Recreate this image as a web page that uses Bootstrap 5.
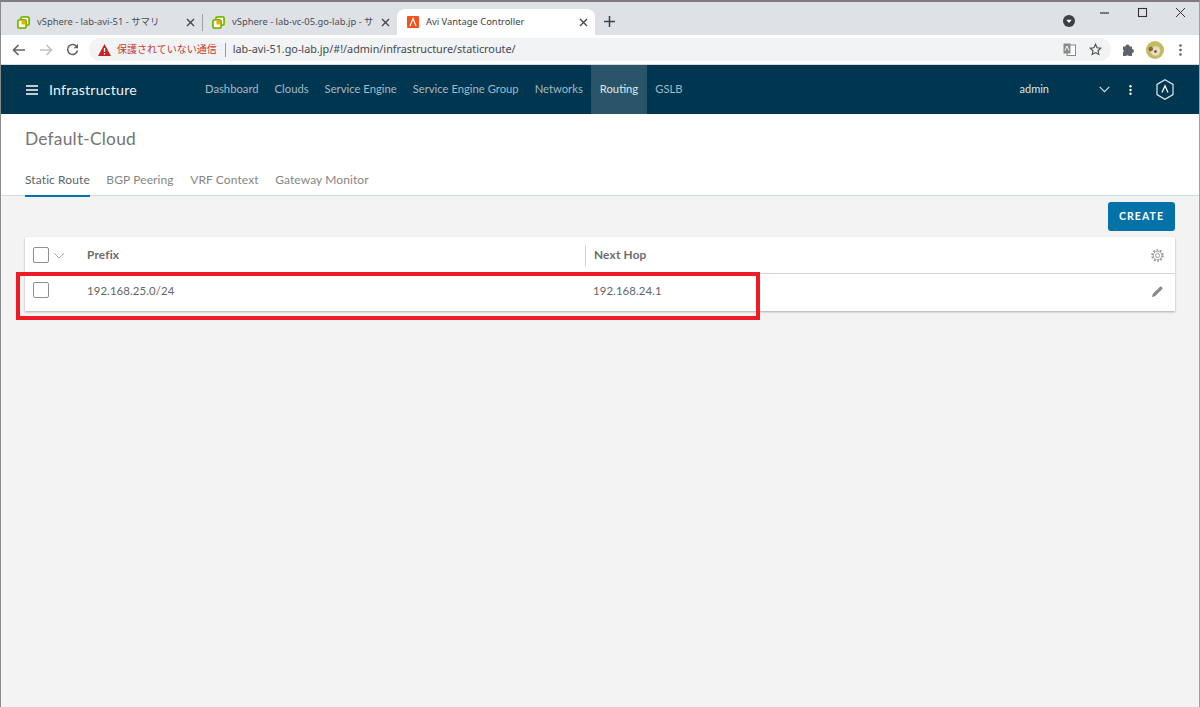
<!DOCTYPE html>
<html lang="ja">
<head>
<meta charset="utf-8">
<title>Avi Vantage Controller</title>
<link rel="stylesheet" href="https://cdn.jsdelivr.net/npm/bootstrap@5.3.0/dist/css/bootstrap.min.css">
<style>
html,body{height:707px;overflow:hidden}
body{font-family:Lato,"Noto Sans CJK JP",sans-serif;background:#f3f3f3;color:#555;border-left:1px solid #8a8a8a;border-top:2px solid #7d7d7d;border-right:1px solid #a0a0a0;position:relative}
svg{display:block;flex:none}
.tabstrip{height:33px;background:#dee1e6;padding-left:7px;font-family:"Noto Sans","Noto Sans CJK JP",sans-serif;font-size:9.4px;color:#4a4d52}
.tabitem{height:26px;width:194px;padding:0 7px 0 9px;position:relative}
.tabitem.cur{background:#fff;border-radius:8px 8px 0 0;width:198px;height:26px;color:#3c4043;padding-left:10px}
.tabitem .ttl{flex:1;white-space:nowrap;padding-left:7px}
.tabsep{width:1px;height:17px;background:#9aa0a6}
.plusic{margin:0 0 8px 9px}
.winctl{margin-left:auto;padding-right:13px;align-self:flex-start;padding-top:1px;gap:27px}
.dlcirc{margin:12px -3px 0 0}
.toolbar{height:29px;background:#fff;padding:0 8px 0 11px;border-bottom:1px solid #d8d8d8;box-sizing:content-box}
.fwd,.rld{margin-left:13px}
.omni{height:23px;width:1022px;background:#f1f3f4;border-radius:12px;margin-left:10px;padding:0 9px;font-family:"Noto Sans","Noto Sans CJK JP",sans-serif;font-size:10.8px;color:#45484c;white-space:nowrap}
.warn{color:#c5392f;font-size:10px;margin-left:6px}
.omnisep{width:1px;height:14px;background:#9a9a9a;margin:0 7px 0 8px}
.staric{margin-left:13px}
.puzzle{margin-left:11px}
.avatar{margin-left:11px}
.kebab{margin-left:15px}
.topnav{height:49px;background:#00364f;padding:0;color:#fff;font-size:11.25px}
.burger{margin-left:25px}
.appname{font-size:14.2px;margin-left:11px;width:148px;letter-spacing:.2px;color:#eef3f5}
.navlink{height:49px;padding:0 8px;color:#a3bac5;display:flex;align-items:center;text-decoration:none}
.navlink.on{background:#2a5568;color:#dfe8ec;padding:0 9px}
.usr{margin-left:auto;color:#dbe6ea;font-size:11px}
.chev{margin-left:50px}
.dots{margin-left:19px}
.hexlogo{margin:0 25px 0 24px}
.pagehead{height:82px;background:#fff;border-bottom:1px solid #d3dcdc;padding:14px 0 0 24px}
.cloudttl{font-size:17.4px;color:#757575;line-height:22px;font-weight:400;margin:0;letter-spacing:.2px}
.subtabs{margin-top:20px;gap:16.500px;font-size:12px;letter-spacing:.1px}
.subtab{height:27px;padding-top:1px;line-height:18px;color:#858585;text-decoration:none;display:block}
.subtab.on{color:#5c6468;border-bottom:2px solid #0073a8}
.actions{padding:6px 24px 0 0;height:41px}
.mkbtn{background:#0272a8;color:#fff;font-size:10.5px;font-weight:700;letter-spacing:1.1px;width:67px;height:29px;border-radius:3px;border:0;padding:0;font-family:Lato,sans-serif}
.gridbox{margin:0 24px 0 24px;background:#fff;box-shadow:0 1px 2px rgba(0,0,0,.3)}
.ghead{height:37px;border-bottom:1px solid #d5d5d5;font-weight:700;font-size:11.8px;color:#6b6b6b;letter-spacing:.2px}
.grow{height:37px;padding-bottom:3px;font-size:11.4px;color:#666;letter-spacing:.1px}
.cbcell{width:62px;padding-left:8px}
.cbrow{padding-bottom:2px}
.cbx{width:16px;height:16px;border:1px solid #8f8f8f;border-radius:2px;background:#fff;display:block}
.colprefix{width:498px}
.colhop{flex:1;padding-left:8px}
.sephead{border-left:1px solid #d0d0d0;height:21px;display:flex;align-items:center}
.endcell{width:24px;padding-right:10px}
.redbox{position:absolute;left:15px;top:270px;width:744px;height:48px;border:4px solid #ed1c24;pointer-events:none}
</style>
</head>
<body>
<div class="tabstrip d-flex align-items-end">
  <div class="tabitem d-flex align-items-center">
    <svg width="13" height="13" viewBox="0 0 13 13"><rect x="3.900" y=".9" width="8.200" height="8.200" rx="1.600" fill="#fff" stroke="#7ab800" stroke-width="1.800"/><rect x=".9" y="3.900" width="8.200" height="8.200" rx="1.600" fill="#fff" stroke="#7ab800" stroke-width="1.800"/><rect x="4.500" y="4.500" width="4" height="4" fill="#f5a800"/></svg>
    <span class="ttl">vSphere - lab-avi-51 - サマリ</span>
    <svg width="9" height="9" viewBox="0 0 9 9"><path d="M1 1l7 7M8 1l-7 7" stroke="#45484c" stroke-width="1.400"/></svg>
  </div>
  <div class="tabsep mb-1"></div>
  <div class="tabitem d-flex align-items-center">
    <svg width="13" height="13" viewBox="0 0 13 13"><rect x="3.900" y=".9" width="8.200" height="8.200" rx="1.600" fill="#fff" stroke="#7ab800" stroke-width="1.800"/><rect x=".9" y="3.900" width="8.200" height="8.200" rx="1.600" fill="#fff" stroke="#7ab800" stroke-width="1.800"/><rect x="4.500" y="4.500" width="4" height="4" fill="#f5a800"/></svg>
    <span class="ttl">vSphere - lab-vc-05.go-lab.jp - サ</span>
    <svg width="9" height="9" viewBox="0 0 9 9"><path d="M1 1l7 7M8 1l-7 7" stroke="#45484c" stroke-width="1.400"/></svg>
  </div>
  <div class="tabitem cur d-flex align-items-center">
    <svg width="12" height="12" viewBox="0 0 12 12"><rect width="12" height="12" rx="1" fill="#f4511e"/><path d="M3 10L6 2.500 9 10" fill="none" stroke="#fff" stroke-width="1.200"/></svg>
    <span class="ttl">Avi Vantage Controller</span>
    <svg width="9" height="9" viewBox="0 0 9 9"><path d="M1 1l7 7M8 1l-7 7" stroke="#45484c" stroke-width="1.400"/></svg>
  </div>
  <svg class="plusic" width="11" height="11" viewBox="0 0 11 11"><path d="M5.500 0v11M0 5.500h11" stroke="#3c4043" stroke-width="1.500"/></svg>
  <div class="winctl d-flex align-items-start">
    <svg class="dlcirc" width="12" height="12" viewBox="0 0 12 12"><circle cx="6" cy="6" r="6" fill="#3c4043"/><path d="M3.300 4.800h5.400L6 8z" fill="#fff"/></svg>
    <svg class="mt-1" width="11" height="11" viewBox="0 0 11 11"><path d="M1 6h9" stroke="#333" stroke-width="1.200"/></svg>
    <svg class="mt-1" width="11" height="11" viewBox="0 0 11 11"><rect x="1.500" y="1.500" width="8" height="8" fill="none" stroke="#333" stroke-width="1.100"/></svg>
    <svg class="mt-1" width="11" height="11" viewBox="0 0 11 11"><path d="M1 1l9 9M10 1l-9 9" stroke="#333" stroke-width="1"/></svg>
  </div>
</div>

<div class="toolbar d-flex align-items-center">
  <svg width="14" height="12" viewBox="0 0 14 12"><path d="M13 6H2M6.500 1L1.500 6l5 5" fill="none" stroke="#5f6368" stroke-width="1.600"/></svg>
  <svg class="fwd" width="14" height="12" viewBox="0 0 14 12"><path d="M1 6h11M7.500 1l5 5-5 5" fill="none" stroke="#bdc1c6" stroke-width="1.600"/></svg>
  <svg class="rld" width="13" height="13" viewBox="0 0 13 13"><path d="M11 4A5 5 0 1 0 11.500 7.500" fill="none" stroke="#5f6368" stroke-width="1.500"/><path d="M12 .8v4.400H7.600z" fill="#5f6368"/></svg>
  <div class="omni d-flex align-items-center">
    <svg width="13" height="12" viewBox="0 0 13 12"><path d="M6.500 0L13 12H0z" fill="#c5221f"/><path d="M6.500 4v4M6.500 9v1.400" stroke="#fff" stroke-width="1.300"/></svg>
    <span class="warn">保護されていない通信</span><span class="omnisep"></span>
    <span>lab-avi-51.go-lab.jp/#!/admin/infrastructure/staticroute/</span>
    <svg class="ms-auto" width="13" height="13" viewBox="0 0 13 13"><rect x="4" y="2" width="8.500" height="10.500" fill="#fff" stroke="#8a8a8a"/><rect x=".5" y=".5" width="7" height="10" fill="#8a8a8a"/><path d="M2 7.500L4 3l2 4.500M9 6v4.500" fill="none" stroke="#fff"/></svg>
    <svg class="staric" width="13" height="13" viewBox="0 0 24 24"><path d="M12 2.500l2.900 6.300 6.800.8-5 4.700 1.300 6.800-6-3.400-6 3.400 1.300-6.800-5-4.700 6.800-.8z" fill="none" stroke="#4a4d52" stroke-width="2.200"/></svg>
  </div>
  <svg class="puzzle" width="13" height="13" viewBox="0 0 13 13"><path d="M1 3.500h2.500a2 2 0 0 1 4 0H10V6a2 2 0 0 1 0 4v3H7a2 2 0 0 0-3 0H1V9.500a2 2 0 0 0 0-3z" fill="#5f6368"/></svg>
  <svg class="avatar" width="18" height="18" viewBox="0 0 18 18"><circle cx="9" cy="9" r="9" fill="#c2bb62"/><circle cx="9.500" cy="10" r="4.800" fill="#e8dcc0"/><circle cx="4.800" cy="8" r="2.300" fill="#8a6a35"/><circle cx="9.500" cy="10.500" r="1.200" fill="#5a4020"/></svg>
  <svg class="kebab" width="3" height="12" viewBox="0 0 3 12"><circle cx="1.500" cy="1.500" r="1.300" fill="#5f6368"/><circle cx="1.500" cy="6" r="1.300" fill="#5f6368"/><circle cx="1.500" cy="10.500" r="1.300" fill="#5f6368"/></svg>
</div>

<nav class="topnav d-flex align-items-center">
  <svg class="burger" width="12" height="10" viewBox="0 0 12 10"><path d="M0 1h12M0 5h12M0 9h12" stroke="#fff" stroke-width="1.700"/></svg>
  <span class="appname">Infrastructure</span>
  <a class="navlink" href="#">Dashboard</a>
  <a class="navlink" href="#">Clouds</a>
  <a class="navlink" href="#">Service Engine</a>
  <a class="navlink" href="#">Service Engine Group</a>
  <a class="navlink" href="#">Networks</a>
  <a class="navlink on" href="#">Routing</a>
  <a class="navlink" href="#">GSLB</a>
  <span class="usr">admin</span>
  <svg class="chev" width="11" height="7" viewBox="0 0 11 7"><path d="M.7.800l4.800 4.800L10.300.800" fill="none" stroke="#cfdde3" stroke-width="1.200"/></svg>
  <svg class="dots" width="3" height="10" viewBox="0 0 3 10"><circle cx="1.500" cy="1.200" r="1.200" fill="#fff"/><circle cx="1.500" cy="5" r="1.200" fill="#fff"/><circle cx="1.500" cy="8.800" r="1.200" fill="#fff"/></svg>
  <svg class="hexlogo" width="18" height="21" viewBox="0 0 18 21"><path d="M9 .8L17 5.400V15.600L9 20.200 1 15.600V5.400z" fill="none" stroke="#dfeaee" stroke-width="1.200"/><path d="M6 13.500L9 6.800l3 6.700" fill="none" stroke="#fff" stroke-width="1.300"/></svg>
</nav>

<header class="pagehead">
  <h1 class="cloudttl">Default-Cloud</h1>
  <div class="subtabs d-flex">
    <a class="subtab on" href="#">Static Route</a>
    <a class="subtab" href="#">BGP Peering</a>
    <a class="subtab" href="#">VRF Context</a>
    <a class="subtab" href="#">Gateway Monitor</a>
  </div>
</header>

<main>
  <div class="actions d-flex justify-content-end">
    <button class="mkbtn" type="button">CREATE</button>
  </div>
  <div class="gridbox">
    <div class="ghead d-flex align-items-center">
      <div class="cbcell d-flex align-items-center"><span class="cbx"></span>
        <svg class="ms-1" width="12" height="7" viewBox="0 0 12 7"><path d="M1 1l5 5 5-5" fill="none" stroke="#aaa" stroke-width="1"/></svg></div>
      <div class="colprefix">Prefix</div>
      <div class="colhop sephead">Next Hop</div>
      <div class="endcell">
        <svg width="13" height="13" viewBox="0 0 13 13"><circle cx="6.500" cy="6.500" r="5.300" fill="none" stroke="#9a9a9a" stroke-width="2" stroke-dasharray="1.800 1.530"/><circle cx="6.500" cy="6.500" r="4.200" fill="#fff" stroke="#9a9a9a" stroke-width=".8"/><circle cx="6.500" cy="6.500" r="2" fill="none" stroke="#9a9a9a"/></svg>
      </div>
    </div>
    <div class="grow d-flex align-items-center">
      <div class="cbcell cbrow"><span class="cbx"></span></div>
      <div class="colprefix">192.168.25.0/24</div>
      <div class="colhop">192.168.24.1</div>
      <div class="endcell">
        <svg width="13" height="13" viewBox="0 0 13 13"><path d="M1 12l.7-3L9 1.700a1 1 0 0 1 1.400 0l.9.9a1 1 0 0 1 0 1.400L4 11.300z" fill="#8a8a8a"/></svg>
      </div>
    </div>
  </div>
</main>
<div class="redbox"></div>
<script src="https://cdn.jsdelivr.net/npm/bootstrap@5.3.0/dist/js/bootstrap.bundle.min.js"></script>
</body>
</html>
